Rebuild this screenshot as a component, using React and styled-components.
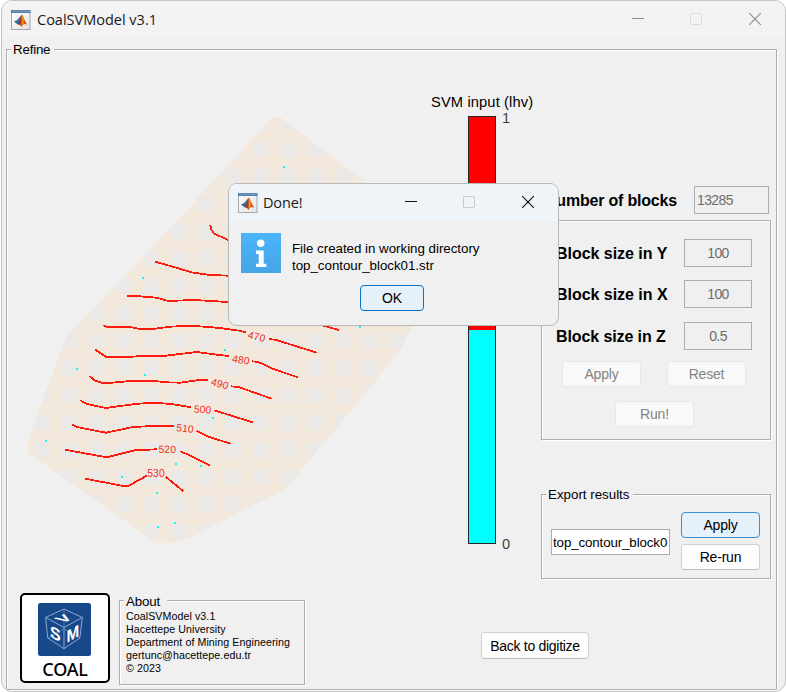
import React from "react";
import styled, { createGlobalStyle } from "styled-components";

const Global = createGlobalStyle`
  *, *::before, *::after { box-sizing: border-box; }
  body { margin: 0; background: #fff; font-family: "Liberation Sans", Arial, sans-serif; color: #000; }
`;

const Stage = styled.div`
  position: relative;
  width: 786px;
  height: 692px;
  overflow: hidden;
`;

const Window = styled.main`
  width: 785px;
  height: 692px;
  margin-left: 1px;
  border: 1px solid #c4c4c4;
  border-radius: 11px;
  background: #f0f0f0;
  overflow: hidden;
`;

const TitleBar = styled.header`
  display: flex;
  align-items: center;
  height: 37px;
  padding-left: 9px;
  background: ${(p) => (p.$active ? "#eff4f9" : "#f3f3f3")};
`;

const Title = styled.h1`
  flex: 1;
  margin: 0 0 0 ${(p) => p.$gap}px;
  font: 400 14.5px/20px "Open Sans", "Noto Sans", sans-serif;
  letter-spacing: ${(p) => p.$spacing || 0}px;
  color: #1a1a1a;
  white-space: nowrap;
`;

const Drawing = styled.svg`
  display: block;
  flex: none;
`;

const GroupBox = styled.section`
  position: relative;
  border: 1px solid #adadad;
  box-shadow: 1px 1px 0 #fff, inset 1px 1px 0 #fff;
`;

const Legend = styled.h2`
  position: absolute;
  top: ${(p) => p.$top || -8}px;
  left: 4px;
  margin: 0;
  padding: 0 ${(p) => p.$pad || 4}px 0 2px;
  background: #f0f0f0;
  font: 400 13.33px/16px "Liberation Sans", Arial, sans-serif;
  letter-spacing: ${(p) => p.$spacing || 0}px;
  white-space: nowrap;
`;

const Refine = styled(GroupBox)`
  width: 771px;
  height: 641px;
  margin: 11px 0 0 4px;
`;

const Workspace = styled.div`
  display: grid;
  grid-template-columns: 420px 114px 230px;
  height: 543px;
`;

const Footer = styled.div`
  display: flex;
  align-items: flex-start;
  padding-left: 13px;
`;

const LegendColumn = styled.div`
  padding-top: 43px;
`;

const BarTitle = styled.div`
  margin-left: 4px;
  height: 20px;
  font-size: 14.67px;
  line-height: 18px;
  letter-spacing: 0.14px;
  white-space: nowrap;
`;

const BarRow = styled.div`
  display: flex;
  margin: 3px 0 0 41px;
`;

const ColorBar = styled.div`
  width: 28px;
  height: 428px;
  border: 1px solid #262626;
  background: linear-gradient(#f00 0 213px, #0ff 213px);
`;

const Ticks = styled.div`
  display: flex;
  flex-direction: column;
  justify-content: space-between;
  height: 444px;
  margin: -7px 0 0 6px;
  font-size: 14.67px;
  line-height: 18px;
  color: #404040;
`;

const SideColumn = styled.div`
  padding-top: 136px;
`;

const CountRow = styled.div`
  display: flex;
  align-items: center;
  height: 28px;
  padding-left: 4px;
`;

const Label = styled.label`
  width: ${(p) => p.$w}px;
  padding-top: 1px;
  font-size: 16px;
  line-height: 20px;
  font-weight: 700;
  letter-spacing: ${(p) => p.$spacing || 0}px;
  white-space: nowrap;
`;

const Field = styled.div`
  width: ${(p) => p.$w || 68}px;
  height: 28px;
  border: 1px solid #abadb3;
  padding-left: ${(p) => (p.$left ? 2 : 0)}px;
  font-size: 14px;
  line-height: 27px;
  letter-spacing: -0.6px;
  text-align: ${(p) => (p.$left ? "left" : "center")};
  color: #6d6d6d;
  white-space: nowrap;
`;

const TextInput = styled.div`
  width: 119px;
  height: 26px;
  margin: 17px 11px 0 0;
  border: 1px solid #abadb3;
  padding: 0 1px;
  background: #fff;
`;

const InputValue = styled.div`
  overflow: hidden;
  font-size: 13.33px;
  line-height: 25px;
  letter-spacing: -0.12px;
  white-space: nowrap;
`;

const Button = styled.button`
  display: block;
  width: ${(p) => p.$w || 79}px;
  height: ${(p) => p.$h || 26}px;
  padding: 0;
  border: 1px solid ${(p) => (p.$focus ? p.$focus : p.disabled ? "#e8e8e8" : "#d0d0d0")};
  border-bottom-color: ${(p) => (p.$focus ? p.$focus : p.disabled ? "#e8e8e8" : "#bcbcbc")};
  border-radius: 4px;
  background: ${(p) => (p.$focus ? "#e5f1fb" : p.disabled ? "#f9f9f9" : "#fdfdfd")};
  color: ${(p) => (p.disabled ? "#838383" : "#000")};
  font: 400 14px/24px "Liberation Sans", Arial, sans-serif;
  letter-spacing: ${(p) => p.$spacing || -0.2}px;
`;

const BlockPanel = styled(GroupBox)`
  height: 220px;
  margin-top: 6px;
  padding: 18px 0 0 14px;
`;

const FieldRow = styled.div`
  display: flex;
  align-items: center;
  height: 28px;
  margin-bottom: ${(p) => p.$after}px;
`;

const ButtonRow = styled.div`
  display: flex;
  gap: 26px;
  margin: 0 0 14px 6px;
`;

const CenteredButton = styled.div`
  margin-left: 59px;
`;

const ExportPanel = styled(GroupBox)`
  display: flex;
  height: 85px;
  margin-top: 54px;
  padding: 17px 0 0 9px;
`;

const ButtonStack = styled.div`
  display: grid;
  gap: 6px;
  align-content: start;
`;

const Logo = styled.figure`
  display: flex;
  flex-direction: column;
  align-items: center;
  width: 90px;
  height: 90px;
  margin: 0;
  border: 2px solid #000;
  border-radius: 5px;
  background: #fff;
`;

const LogoText = styled.figcaption`
  margin-top: 3px;
  font: 500 18px/20px "Noto Sans", sans-serif;
  letter-spacing: -0.2px;
`;

const About = styled(GroupBox)`
  width: 186px;
  height: 85px;
  margin: 7px 0 0 9px;
  padding: 9px 0 0 6px;
  font-size: 10.67px;
  line-height: 13px;
  letter-spacing: 0.07px;
  white-space: nowrap;
`;

const BackSlot = styled.div`
  margin: 39px 0 0 176px;
`;

const Dialog = styled.section`
  position: absolute;
  left: 228px;
  top: 183px;
  width: 331px;
  height: 143px;
  border: 1px solid #b9b9b9;
  border-radius: 9px;
  background: #f0f0f0;
  overflow: hidden;
`;

const DialogBody = styled.div`
  display: flex;
  padding: 12px 0 0 12px;
`;

const Message = styled.p`
  margin: 7px 0 0 11px;
  font-size: 13.33px;
  line-height: 17px;
  letter-spacing: ${(p) => p.$spacing || 0}px;
  white-space: nowrap;
`;

const DialogAction = styled.div`
  display: flex;
  margin: 11px 0 0 131px;
`;

function MatlabIcon() {
  return (
    <Drawing width="20" height="20" viewBox="0 0 20 20">
      <defs>
        <linearGradient id="sheet" x1="0" y1="0" x2="1" y2="1">
          <stop offset="0" stopColor="#fff" />
          <stop offset="1" stopColor="#e3e3e3" />
        </linearGradient>
        <linearGradient id="peak" x1="0" y1="0" x2="1" y2="0">
          <stop offset="0" stopColor="#7a1d10" />
          <stop offset="0.35" stopColor="#c9420f" />
          <stop offset="0.52" stopColor="#f6a52d" />
          <stop offset="0.65" stopColor="#e0560f" />
          <stop offset="1" stopColor="#b6300f" />
        </linearGradient>
      </defs>
      <rect x="0.5" y="0.5" width="18.5" height="19" fill="url(#sheet)" stroke="#a5a9ad" />
      <path d="M0 0H19.5V3H0Z" fill="#547fa8" />
      <path d="M1 1.2H19" stroke="#86aaca" strokeWidth="0.8" />
      <path d="M3 11.6 6.6 10 10 6 8.8 12.6 6.8 14.5Z" fill="#2a66a4" />
      <path d="M6.2 10.2 10.6 4.8 9.4 12 7 14 5 12.7Z" fill="#3d6c9c" />
      <path d="M6.8 14.5C9 13 9.3 6 11 4.6 12.7 5.5 13.5 12 16.5 14.8 14 13.4 12.6 14 10.5 17 9.4 15 8.4 14.5 6.8 14.5Z" fill="url(#peak)" />
    </Drawing>
  );
}

function WindowControls({ color, dim }) {
  return (
    <Drawing width="160" height="37" viewBox="0 0 160 37" fill="none">
      <path d="M7 17.5H19" stroke={color} />
      <rect x="65.5" y="12.5" width="11" height="11" rx="0.8" stroke={dim} />
      <path d="M124.2 12.2 135.8 23.8M135.8 12.2 124.2 23.8" stroke={color} strokeWidth="1.15" />
    </Drawing>
  );
}

const CONTOURS = [
  "210.3,225.3 211.3,229.3 214,233.5 228.7,240.3 250,250",
  "155.3,261.7 193.3,272.7 210,275 229,275.7",
  "127.3,295.7 136,296 156.7,297.7 168.3,301 193.3,300 213.3,301 229,302.3",
  "321,325 338.7,330",
  "103.3,325.3 106,326.7 128.3,326.7 140,329 153.3,329 170,326.7 191.7,325.7 220,328 240,330.8 245.7,332.3",
  "269,339 276.7,340 286.7,343.3 316.7,352.7",
  "95.3,349.7 106.7,357.3 123.3,357.3 146.7,355.7 163.3,356 196.7,352 216.7,354.7 229,356",
  "252.3,361.3 258.3,362 273.3,369 297.7,377.3",
  "89.3,376 95,380.7 101.7,382.7 111.7,382.7 130,381 155,381 165,382.3 180,382.7 196.7,380.3 207.7,380",
  "231.3,386.3 239.3,387.3 271.7,398.7",
  "80.3,400.3 86.7,404 106,408 135,404 151.7,402.7 171.7,404 190.7,407.3",
  "214.3,410.3 225,413.7 252.7,422.3",
  "72.3,425 78.3,427.3 106,432.7 133.3,427 153.3,426 173.7,426",
  "196.7,430.7 208.3,436.7 230.7,443.7",
  "65,449.7 106.7,457.3 135,450.3 156.7,449.3",
  "180.3,451 210,465.3",
  "85.3,478.7 123.3,486 128.3,486 146.7,475.7",
  "165.7,476.7 183.3,491.3",
];

const LEVELS = [
  [470, 256.7, 336.5, 14],
  [480, 241, 359.7, 9],
  [490, 219.8, 383.6, 15],
  [500, 202.7, 409.3, 4],
  [510, 185, 428.3, 6],
  [520, 167.3, 449.2, 1],
  [530, 156, 473.6, 0],
];

const POINTS = [
  [284, 167], [143, 278], [77, 369], [145, 375], [225, 350], [213, 418], [46, 441],
  [176, 464], [201, 466], [122, 477], [157, 493], [158, 527], [175, 523], [360, 327],
];

const OUTLINE =
  "M273 117H280L365 182 430 230 413 325 402 347 387 367 285 490 243 510 192 537 174 543H157L148 537 28 453V440L63 345 66 337 82 320 145 255Z";

function ContourMap() {
  return (
    <Drawing width="420" height="543" viewBox="7 50 420 543">
      <defs>
        <pattern id="cells" x="253" y="142" width="27.3" height="27.3" patternUnits="userSpaceOnUse">
          <rect width="27.3" height="27.3" fill="#f3e8dc" />
          <rect width="15" height="15" fill="#ebe9e8" />
        </pattern>
      </defs>
      <path d={OUTLINE} fill="url(#cells)" />
      <g fill="none" stroke="#ff1a10" strokeWidth="1.8" shapeRendering="crispEdges">
        {CONTOURS.map((points) => (
          <polyline key={points} points={points} />
        ))}
      </g>
      <g fill="#f02a20" fontFamily="Liberation Sans, Arial, sans-serif" fontSize="10.3" letterSpacing="0.1" textAnchor="middle">
        {LEVELS.map(([level, x, y, angle]) => (
          <text key={level} x={x} y={y + 3.7} transform={`rotate(${angle} ${x} ${y})`}>
            {level}
          </text>
        ))}
      </g>
      <g fill="#1ff5ee">
        {POINTS.map(([x, y]) => (
          <rect key={`${x}-${y}`} x={x - 1} y={y - 1} width="2" height="2" />
        ))}
      </g>
    </Drawing>
  );
}

function CubeMark() {
  return (
    <Drawing width="54" height="61" viewBox="0 0 54 61">
      <rect x="0" y="8" width="53" height="53" rx="2.5" fill="#17498a" />
      <g fill="none" stroke="#a9c0de" strokeWidth="0.8">
        <path d="M26 14 44.3 22.5 26 32.5 7.6 22.5ZM7.6 22.5 9.8 43 26 53.7 41.8 43 44.3 22.5M26 32.5V53.7" />
        <path d="M26 14V32.5M9.8 43 26 34 41.8 43" strokeWidth="0.4" />
      </g>
      <g fill="#fff" fontFamily="Liberation Sans, Arial, sans-serif" fontWeight="700" textAnchor="middle">
        <text transform="matrix(0.95 0.45 0 1 17.3 44.5)" fontSize="17">S</text>
        <text transform="matrix(0.9 -0.5 0 1 34.8 44.5)" fontSize="17">M</text>
        <text transform="matrix(1 -0.43 0.83 0.43 30 26)" fontSize="16">V</text>
      </g>
    </Drawing>
  );
}

function InfoIcon() {
  return (
    <Drawing width="40" height="40" viewBox="0 0 40 40">
      <defs>
        <linearGradient id="info" x1="0" y1="0" x2="0" y2="1">
          <stop offset="0" stopColor="#4bb5fb" />
          <stop offset="1" stopColor="#45a5e6" />
        </linearGradient>
      </defs>
      <rect width="40" height="40" fill="url(#info)" />
      <circle cx="19.7" cy="10.3" r="3.7" fill="#fff" />
      <path d="M15 17.5H22.7V30.7H25.3V34H15V30.7H17.7V21H15Z" fill="#fff" />
    </Drawing>
  );
}

export default function App() {
  return (
    <>
      <Global />
      <Stage>
        <Window>
          <TitleBar>
            <MatlabIcon />
            <Title $gap={6}>CoalSVModel v3.1</Title>
            <WindowControls color="#8c8c8c" dim="#dcdcdc" />
          </TitleBar>
          <Refine>
            <Legend $spacing={-0.2}>Refine</Legend>
            <Workspace>
              <ContourMap />
              <LegendColumn>
                <BarTitle>SVM input (lhv)</BarTitle>
                <BarRow>
                  <ColorBar />
                  <Ticks>
                    <span>1</span>
                    <span>0</span>
                  </Ticks>
                </BarRow>
              </LegendColumn>
              <SideColumn>
                <CountRow>
                  <Label $w={149} $spacing={-0.2}>Number of blocks</Label>
                  <Field $w={75} $left>13285</Field>
                </CountRow>
                <BlockPanel>
                  <FieldRow $after={13}>
                    <Label $w={128} $spacing={-0.03}>Block size in Y</Label>
                    <Field>100</Field>
                  </FieldRow>
                  <FieldRow $after={14}>
                    <Label $w={128} $spacing={-0.03}>Block size in X</Label>
                    <Field>100</Field>
                  </FieldRow>
                  <FieldRow $after={11}>
                    <Label $w={128} $spacing={-0.1}>Block size in Z</Label>
                    <Field>0.5</Field>
                  </FieldRow>
                  <ButtonRow>
                    <Button disabled>Apply</Button>
                    <Button disabled>Reset</Button>
                  </ButtonRow>
                  <CenteredButton>
                    <Button disabled>Run!</Button>
                  </CenteredButton>
                </BlockPanel>
                <ExportPanel>
                  <Legend>Export results</Legend>
                  <TextInput>
                    <InputValue>top_contour_block01</InputValue>
                  </TextInput>
                  <ButtonStack>
                    <Button $focus="#3c8fd0">Apply</Button>
                    <Button>Re-run</Button>
                  </ButtonStack>
                </ExportPanel>
              </SideColumn>
            </Workspace>
            <Footer>
              <Logo>
                <CubeMark />
                <LogoText>COAL</LogoText>
              </Logo>
              <About>
                <Legend $top={-7} $pad={7} $spacing={-0.15}>About</Legend>
                <div>CoalSVModel v3.1</div>
                <div>Hacettepe University</div>
                <div>Department of Mining Engineering</div>
                <div>gertunc@hacettepe.edu.tr</div>
                <div>© 2023</div>
              </About>
              <BackSlot>
                <Button $w={108} $h={27} $spacing={-0.28}>Back to digitize</Button>
              </BackSlot>
            </Footer>
          </Refine>
        </Window>
        <Dialog>
          <TitleBar $active>
            <MatlabIcon />
            <Title $gap={5} $spacing={-0.15}>Done!</Title>
            <WindowControls color="#111" dim="#c6c9cc" />
          </TitleBar>
          <DialogBody>
            <InfoIcon />
            <Message $spacing={-0.02}>
              File created in working directory
              <br />
              top_contour_block01.str
            </Message>
          </DialogBody>
          <DialogAction>
            <Button $w={64} $focus="#0a72c4">OK</Button>
          </DialogAction>
        </Dialog>
      </Stage>
    </>
  );
}
